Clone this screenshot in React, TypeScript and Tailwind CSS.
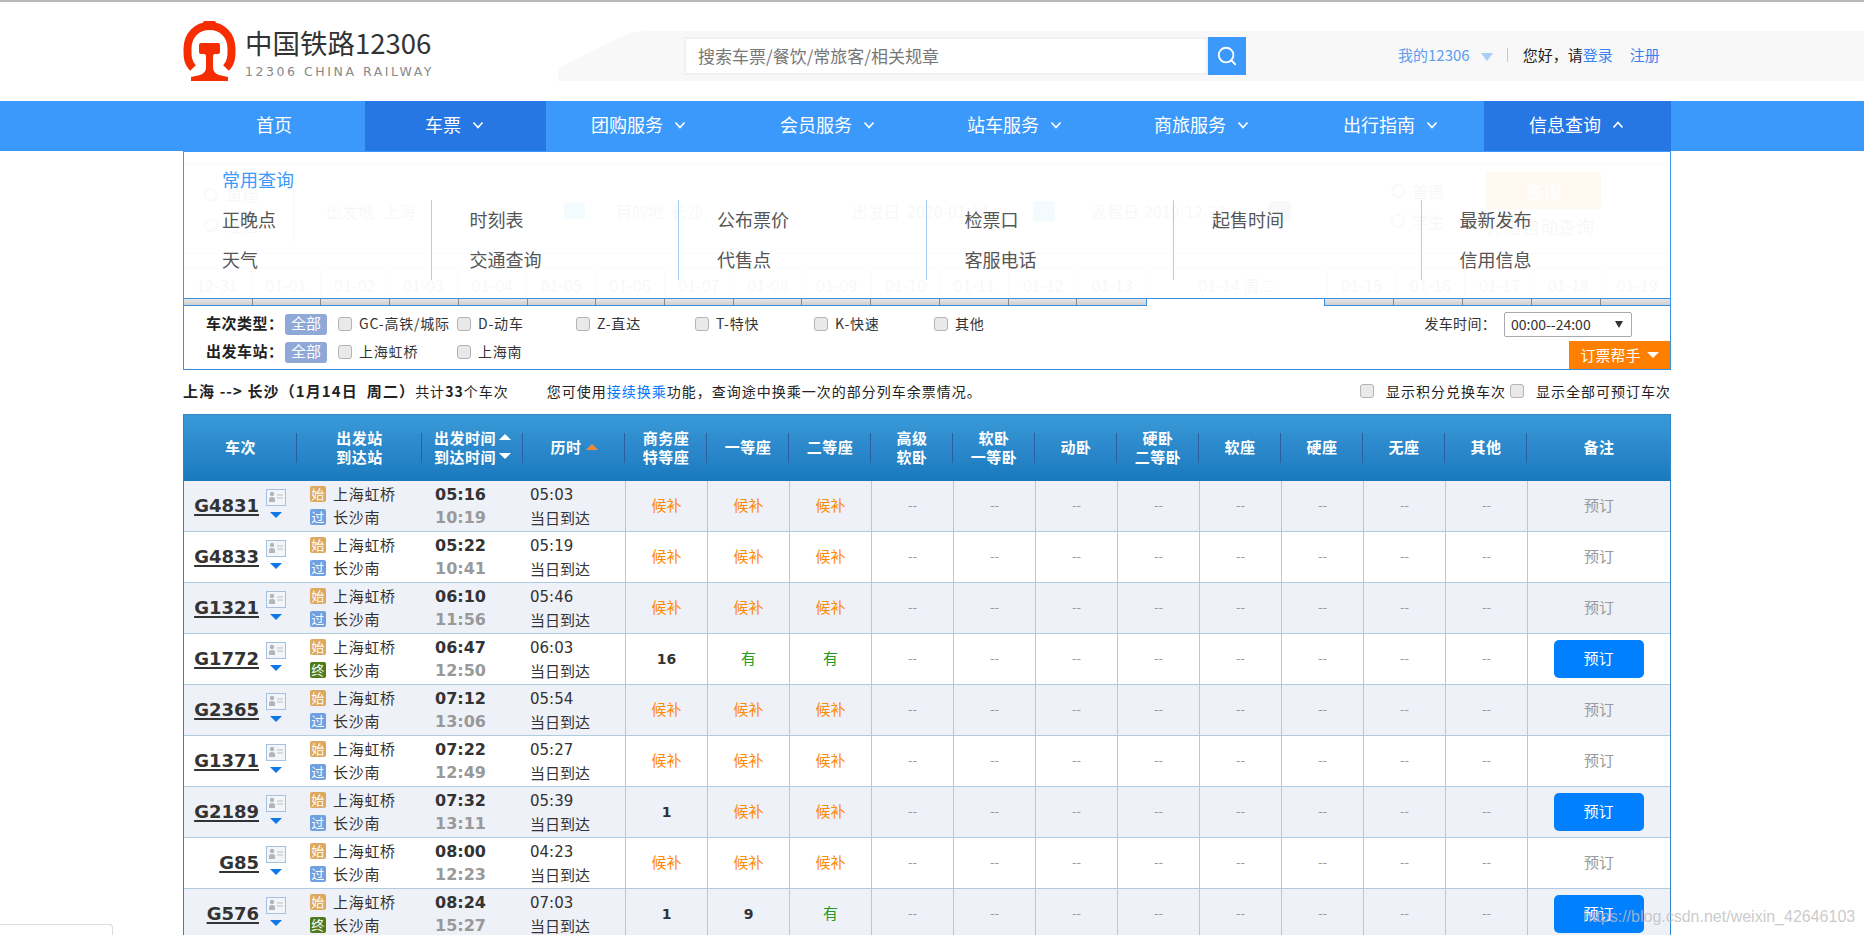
import { Search } from "lucide-react";

const CJK = "font-['Noto_Sans_CJK_SC',sans-serif]";
const PRIMARY = "font-['DejaVu_Sans',sans-serif]";

function Chevron({ up }: { up?: boolean }) {
  return (
    <svg width="12" height="8" viewBox="0 0 12 8" className="ml-[11px] mt-[1px]">
      <polyline points={up ? "1.5,6.5 6,1.5 10.5,6.5" : "1.5,1.5 6,6.5 10.5,1.5"} fill="none" stroke="#fff" strokeWidth="1.7" />
    </svg>
  );
}

function Logo() {
  return (
    <svg width="53" height="60" viewBox="0 0 53 60" className="shrink-0">
      <rect x="20" y="0" width="13" height="7" rx="2" fill="#f62d00" />
      <path d="M10 47 C4 41 4.500 34 4.500 28 C4.500 14 14 5 26.500 5 C39 5 48.500 14 48.500 28 C48.500 34 49 41 43 47" fill="none" stroke="#f62d00" strokeWidth="8" />
      <path d="M18 22 H35 Q37 22 37 24 V31 Q37 33 35 33 H32 Q30 33 30 36 V46 Q30 52 36 54 L45 56 V60 H8 V56 L17 54 Q23 52 23 46 V36 Q23 33 21 33 H18 Q16 33 16 31 V24 Q16 22 18 22 Z" fill="#f62d00" />
    </svg>
  );
}

function Header() {
  return (
    <header className="relative h-[101px] border-t-2 border-[#b8b8b8] bg-white">
      <svg className="absolute left-[558px] top-[29px] h-[50px] w-[1306px]" viewBox="0 0 1306 50" preserveAspectRatio="none">
        <path d="M0 50 V42 Q0 38 6 34 L62 6 Q74 0 92 0 H1306 V50 Z" fill="#f8f8f8" />
      </svg>
      <div className="relative ml-[183px] flex h-full w-[1488px] items-start">
        <div className="mt-[19px] flex">
          <Logo />
          <div className="ml-[9px] flex w-[190px] flex-col">
            <span className={`${CJK} mt-[4px] whitespace-nowrap text-[27.500px] leading-[34px] text-[#333]`}>中国铁路12306</span>
            <span className={`${PRIMARY} mt-[5px] whitespace-nowrap text-[12.500px] leading-[15px] tracking-[2.550px] text-[#888]`}>12306 CHINA RAILWAY</span>
          </div>
        </div>
        <div className="ml-[249px] mt-[35px] flex h-[38px]">
          <div className="flex h-full w-[524px] items-center border-2 border-[#f1f1f1] bg-white pb-[2px] pl-[12px]">
            <span className={`${CJK} text-[17px] leading-none text-[#777]`}>搜索车票/餐饮/常旅客/相关规章</span>
          </div>
          <div className="flex h-full w-[38px] items-center justify-center bg-[#3b99fc]">
            <Search size={22} color="#fff" strokeWidth={2} />
          </div>
        </div>
        <div className={`${CJK} ml-[152px] mt-[43px] flex items-center text-[15px] leading-[20px]`}>
          <span className="text-[#5c9ef0]">我的12306</span>
          <span className="ml-[11px] mt-[3px] h-0 w-0 border-x-[6px] border-t-[8px] border-x-transparent border-t-[#a9cdf5]" />
          <span className="ml-[14px] h-[14px] w-px bg-[#a8cdf5]" />
          <span className="ml-[15px] text-[#222]">您好，请</span>
          <span className="text-[#3b82ef]">登录</span>
          <span className="ml-[17px] text-[#3b82ef]">注册</span>
        </div>
      </div>
    </header>
  );
}

const tabs = [
  { t: "首页", w: "w-[182px] justify-center", plain: true },
  { t: "车票", w: "w-[181px] pl-[60px] bg-[#2676e3]" },
  { t: "团购服务", w: "w-[189px] pl-[45px]" },
  { t: "会员服务", w: "w-[187px] pl-[45px]" },
  { t: "站车服务", w: "w-[187px] pl-[45px]" },
  { t: "商旅服务", w: "w-[189px] pl-[45px]" },
  { t: "出行指南", w: "w-[186px] pl-[45px]" },
  { t: "信息查询", w: "w-[187px] pl-[45px] bg-[#2676e3]", up: true },
];

function Nav() {
  return (
    <nav className="h-[50px] bg-[#3b99fc]">
      <div className={`${CJK} ml-[183px] flex h-full w-[1488px] text-[18px] leading-[24px] text-white`}>
        {tabs.map((x) => (
          <div key={x.t} className={`flex h-full items-center pb-[4px] ${x.w}`}>
            <span>{x.t}</span>
            {!x.plain && <Chevron up={x.up} />}
          </div>
        ))}
      </div>
    </nav>
  );
}

const dateCols = ["12-31", "01-01", "01-02", "01-03", "01-04", "01-05", "01-06", "01-07", "01-08", "01-09", "01-10", "01-11", "01-12", "01-13"];
const dateRight = ["01-15", "01-16", "01-17", "01-18", "01-19"];

function GhostForm() {
  return (
    <div className={`${CJK} h-[146px] text-[16px] leading-[22px] text-[#666]`}>
      <div className="h-[13px] border-b border-[#9ab]" />
      <div className="flex h-[90px] border-b border-[#9ab]">
        <div className="mt-[20px] flex h-[60px] w-[111px] flex-col gap-[8px] border-r border-[#99a] pl-[21px]">
          <div className="flex items-center gap-[8px]">
            <span className="h-[14px] w-[14px] rounded-full border-2 border-[#3b99fc]" />
            单程
          </div>
          <div className="flex items-center gap-[8px]">
            <span className="h-[14px] w-[14px] rounded-full border-2 border-[#888]" />
            往返
          </div>
        </div>
        <div className="mt-[36px] flex h-[22px] items-center whitespace-nowrap">
          <span className="ml-[32px] w-[57px]">出发地</span>
          <span className="w-[181px]">上海</span>
          <span className="h-[16px] w-[21px] rounded-[3px] bg-[#27a9e8]" />
          <span className="ml-[31px] w-[55px]">目的地</span>
          <span className="w-[181px]">长沙</span>
          <span className="w-[55px]">出发日</span>
          <span className="w-[126px]">2020-01-14</span>
          <span className="h-[20px] w-[22px] rounded-[2px] bg-[#27a9e8]" />
          <span className="ml-[36px] w-[53px]">返程日</span>
          <span className="w-[125px]">2019-12-31</span>
          <span className="h-[20px] w-[22px] rounded-[2px] bg-[#777]" />
        </div>
        <div className="ml-[100px] mt-[16px] flex h-[60px] w-[70px] flex-col gap-[8px] whitespace-nowrap">
          <div className="flex items-center gap-[7px]">
            <span className="h-[14px] w-[14px] rounded-full border-2 border-[#888]" />
            普通
          </div>
          <div className="flex items-center gap-[7px]">
            <span className="h-[14px] w-[14px] rounded-full border-2 border-[#888]" />
            学生
          </div>
        </div>
        <div className="ml-[25px] mt-[8px] flex flex-col">
          <div className="flex h-[37px] w-[115px] items-center justify-center rounded-[3px] bg-[#ff8000] text-[18px] text-white">查询</div>
          <span className="mt-[6px] whitespace-nowrap text-[18px]">开启自动查询</span>
        </div>
      </div>
      <div className="mt-[14px] flex h-[28px] border-t border-[#9ab] text-[16px] leading-[32px]">
        {dateCols.map((d) => (
          <div key={d} className="w-[69px] border-r border-[#aab] text-center">
            {d}
          </div>
        ))}
        <div className="w-[180px] text-center">01-14 周二</div>
        {dateRight.map((d) => (
          <div key={d} className="w-[69px] border-l border-[#aab] text-center">
            {d}
          </div>
        ))}
      </div>
    </div>
  );
}

const menu = [
  ["正晚点", "天气"],
  ["时刻表", "交通查询"],
  ["公布票价", "代售点"],
  ["检票口", "客服电话"],
  ["起售时间", ""],
  ["最新发布", "信用信息"],
];

function Dropdown() {
  return (
    <div className={`${CJK} absolute inset-0 border-x border-t border-[#3b99fc] bg-white/[0.95] pt-[13px]`}>
      <div className="h-[30px] pl-[38px] text-[18px] leading-[28px] text-[#3b99fc]">常用查询</div>
      <div className="mt-[5px] flex">
        {menu.map((col, i) => (
          <div key={col[0]} className={`h-[80px] w-[247.500px] pl-[38px] text-[18px] leading-[38px] text-[#555] ${i < 5 ? "border-r border-[#a9cdf5]" : ""}`}>
            <div className="h-[40px]">{col[0]}</div>
            <div className="h-[40px]">{col[1]}</div>
          </div>
        ))}
      </div>
    </div>
  );
}

function Strip() {
  return (
    <div className="flex h-[8px] border-x border-[#3b99fc]">
      <div className="flex w-[962px] border-y border-[#3b8fdc] bg-gradient-to-b from-[#e6e6e6] to-[#cfcfcf]">
        {dateCols.map((d) => (
          <div key={d} className="w-[69px] border-r border-[#888] last:border-r-0" />
        ))}
      </div>
      <div className="w-[181px] border-x border-t border-[#3b8fdc] bg-white" />
      <div className="flex flex-1 border-y border-[#3b8fdc] bg-gradient-to-b from-[#e6e6e6] to-[#cfcfcf]">
        {dateRight.map((d) => (
          <div key={d} className="w-[69px] border-r border-[#888] last:border-r-0" />
        ))}
      </div>
    </div>
  );
}

function Check({ className = "" }: { className?: string }) {
  return <span className={`inline-block h-[14px] w-[14px] shrink-0 rounded-[3px] border border-[#b4b4b4] bg-[#e9e9e9] ${className}`} />;
}

function FilterItem({ label, w }: { label: string; w: string }) {
  return (
    <div className={`flex items-center ${w}`}>
      <Check />
      <span className="ml-[7px] whitespace-nowrap pb-[2px] tracking-[0.800px]">{label}</span>
    </div>
  );
}

function Filters() {
  return (
    <div className={`${CJK} h-[64px] border-x border-b border-[#3b8fdc] pt-[4px] text-[14px] leading-[20px] text-[#333]`}>
      <div className="flex h-[28px] items-center pl-[21px]">
        <span className="w-[80px] whitespace-nowrap pb-[2px] pl-[1px] text-[15px] font-bold tracking-[0.500px] text-[#222]">车次类型：</span>
        <span className="flex h-[21px] w-[42px] items-center justify-center rounded-[3px] bg-[#8fa8d8] pb-[2px] text-[15px] text-white">全部</span>
        <FilterItem label="GC-高铁/城际" w="ml-[11px] w-[119px]" />
        <FilterItem label="D-动车" w="w-[119px]" />
        <FilterItem label="Z-直达" w="w-[119px]" />
        <FilterItem label="T-特快" w="w-[119px]" />
        <FilterItem label="K-快速" w="w-[120px]" />
        <FilterItem label="其他" w="w-[60px]" />
        <div className="ml-auto flex items-center pr-[38px]">
          <span className="mr-[8px] pb-[2px] tracking-[0.300px]">发车时间：</span>
          <div className="flex h-[25px] w-[128px] items-center justify-between rounded-[2px] border border-[#aaa] bg-white pl-[6px] pr-[8px] text-[14px]">
            <span>00:00--24:00</span>
            <span className="h-0 w-0 border-x-[4px] border-t-[7px] border-x-transparent border-t-[#333]" />
          </div>
        </div>
      </div>
      <div className="flex h-[31px] items-start pl-[21px]">
        <div className="flex h-[28px] items-center">
          <span className="w-[80px] whitespace-nowrap pb-[2px] pl-[1px] text-[15px] font-bold tracking-[0.500px] text-[#222]">出发车站：</span>
          <span className="flex h-[21px] w-[42px] items-center justify-center rounded-[3px] bg-[#8fa8d8] pb-[2px] text-[15px] text-white">全部</span>
          <FilterItem label="上海虹桥" w="ml-[11px] w-[119px]" />
          <FilterItem label="上海南" w="w-[119px]" />
        </div>
        <div className="ml-auto mt-[3px] flex h-[28px] w-[101px] items-center justify-center gap-[6px] bg-[#ff8000] text-[15px] text-white">
          订票帮手
          <span className="h-0 w-0 border-x-[6px] border-t-[6px] border-x-transparent border-t-white" />
        </div>
      </div>
    </div>
  );
}

function Summary() {
  return (
    <div className={`${CJK} flex h-[44px] items-center whitespace-nowrap pb-[3px] text-[14px] leading-[20px] tracking-[1px] text-[#222]`}>
      <span className="text-[15px] font-bold tracking-[1.100px]">上海 --&gt; 长沙（1月14日&nbsp; 周二）</span>
      <span>共计<b>33</b>个车次</span>
      <span className="ml-[38px]">您可使用<span className="text-[#0077ff]">接续换乘</span>功能，查询途中换乘一次的部分列车余票情况。</span>
      <div className="ml-auto flex items-center">
        <Check />
        <span className="ml-[12px]">显示积分兑换车次</span>
        <Check className="ml-[4px]" />
        <span className="ml-[12px]">显示全部可预订车次</span>
      </div>
    </div>
  );
}

const GRID = "grid grid-cols-[113px_125px_101px_102px_repeat(11,82px)_143px]";

const heads: { a: string; b?: string; sort?: string }[] = [
  { a: "车次" },
  { a: "出发站", b: "到达站" },
  { a: "出发时间", b: "到达时间", sort: "time" },
  { a: "历时", sort: "dur" },
  { a: "商务座", b: "特等座" },
  { a: "一等座" },
  { a: "二等座" },
  { a: "高级", b: "软卧" },
  { a: "软卧", b: "一等卧" },
  { a: "动卧" },
  { a: "硬卧", b: "二等卧" },
  { a: "软座" },
  { a: "硬座" },
  { a: "无座" },
  { a: "其他" },
  { a: "备注" },
];

function TableHead() {
  return (
    <div className={`${GRID} ${CJK} h-[66px] items-center bg-gradient-to-b from-[#3a9ad9] to-[#1a78bd] text-[15px] font-bold leading-[19px] tracking-[0.500px] text-white`}>
      {heads.map((h, i) => (
        <div key={h.a + i} className={`flex h-[30px] items-center justify-center pb-[3px] pl-[1px] text-center ${i < 15 ? "border-r border-[#2c5f9f]" : ""}`}>
          {h.sort === "time" ? (
            <div className="flex flex-col">
              <div className="flex items-center gap-[3px]">
                {h.a}
                <span className="h-0 w-0 border-x-[6px] border-b-[6px] border-x-transparent border-b-white" />
              </div>
              <div className="flex items-center gap-[3px]">
                {h.b}
                <span className="h-0 w-0 border-x-[6px] border-t-[6px] border-x-transparent border-t-white" />
              </div>
            </div>
          ) : h.sort === "dur" ? (
            <div className="flex items-center gap-[4px]">
              {h.a}
              <span className="h-0 w-0 border-x-[6px] border-b-[6px] border-x-transparent border-b-[#f08a3c]" />
            </div>
          ) : (
            <div>
              {h.a}
              {h.b && <br />}
              {h.b}
            </div>
          )}
        </div>
      ))}
    </div>
  );
}

function CardIcon() {
  return (
    <svg width="20" height="17" viewBox="0 0 20 17">
      <rect x="0.500" y="0.500" width="19" height="16" fill="#f2f5fa" stroke="#a6c1de" />
      <circle cx="6" cy="5" r="2.200" fill="#b5b5b5" />
      <path d="M3 13 V10 Q3 8 6 8 Q9 8 9 10 V13 Z" fill="#b5b5b5" />
      <path d="M11 6 H17 M11 9 H17" stroke="#c0c0c0" strokeWidth="1.200" />
    </svg>
  );
}

function Badge({ t, c }: { t: string; c: string }) {
  return <span className={`flex h-[16px] w-[16px] items-center justify-center rounded-[2px] pb-[1px] text-[13px] leading-none text-white ${c}`}>{t}</span>;
}

type R = { no: string; a: string; b: string; d: string; end: "过" | "终"; seats: string[]; book?: boolean };

const H = "候补";
const rows: R[] = [
  { no: "G4831", a: "05:16", b: "10:19", d: "05:03", end: "过", seats: [H, H, H] },
  { no: "G4833", a: "05:22", b: "10:41", d: "05:19", end: "过", seats: [H, H, H] },
  { no: "G1321", a: "06:10", b: "11:56", d: "05:46", end: "过", seats: [H, H, H] },
  { no: "G1772", a: "06:47", b: "12:50", d: "06:03", end: "终", seats: ["16", "有", "有"], book: true },
  { no: "G2365", a: "07:12", b: "13:06", d: "05:54", end: "过", seats: [H, H, H] },
  { no: "G1371", a: "07:22", b: "12:49", d: "05:27", end: "过", seats: [H, H, H] },
  { no: "G2189", a: "07:32", b: "13:11", d: "05:39", end: "过", seats: ["1", H, H], book: true },
  { no: "G85", a: "08:00", b: "12:23", d: "04:23", end: "过", seats: [H, H, H] },
  { no: "G576", a: "08:24", b: "15:27", d: "07:03", end: "终", seats: ["1", "9", "有"], book: true },
];

function Seat({ v }: { v: string }) {
  if (v === H) return <span className="pb-[2px] text-[15px] text-[#ff8a00]">{v}</span>;
  if (v === "有") return <span className="pb-[2px] text-[15px] text-[#259b24]">{v}</span>;
  return <span className={`${PRIMARY} text-[14px] font-bold text-[#333]`}>{v}</span>;
}

function Row({ r, i }: { r: R; i: number }) {
  const cell = "flex h-full items-center justify-center border-l border-[#aecbdf]";
  return (
    <div className={`${GRID} ${CJK} h-[51px] items-center border-b border-[#aecbdf] ${i % 2 === 0 ? "bg-[#eef1f8]" : "bg-white"}`}>
      <div className="flex h-full items-center justify-end pr-[11px]">
        <span className={`${PRIMARY} -mt-[1px] text-[18px] font-bold leading-[22px] text-[#333] underline decoration-2 underline-offset-2`}>{r.no}</span>
        <div className="-mt-[6px] ml-[7px] flex w-[20px] flex-col items-center gap-[6px]">
          <CardIcon />
          <span className="h-0 w-0 border-x-[6px] border-t-[6px] border-x-transparent border-t-[#0f78e6]" />
        </div>
      </div>
      <div className="flex flex-col gap-[5px] pb-[2px] pl-[13px] text-[15px] leading-[18px] tracking-[0.700px] text-[#333]">
        <div className="flex items-center gap-[7px]">
          <Badge t="始" c="bg-[#dda860]" />
          上海虹桥
        </div>
        <div className="flex items-center gap-[7px]">
          <Badge t={r.end} c={r.end === "过" ? "bg-[#6fa0e0]" : "bg-[#4d7a1b]"} />
          长沙南
        </div>
      </div>
      <div className={`${PRIMARY} flex flex-col gap-[5px] pl-[13px] text-[16px] font-bold leading-[18px]`}>
        <span className="text-[#333]">{r.a}</span>
        <span className="text-[#999]">{r.b}</span>
      </div>
      <div className="flex flex-col gap-[5px] pl-[7px] text-[15px] leading-[18px] text-[#333]">
        <span className={`${PRIMARY} text-[15px]`}>{r.d}</span>
        <span>当日到达</span>
      </div>
      {r.seats.map((s, k) => (
        <div key={k} className={cell}>
          <Seat v={s} />
        </div>
      ))}
      {Array.from({ length: 8 }).map((_, k) => (
        <div key={k} className={`${cell} pb-[2px] text-[13px] text-[#999]`}>
          --
        </div>
      ))}
      <div className={cell}>
        {r.book ? (
          <span className="-ml-[1px] flex h-[38px] w-[90px] items-center justify-center rounded-[5px] bg-[#0080ff] pb-[2px] text-[15px] text-white">预订</span>
        ) : (
          <span className="pb-[2px] text-[15px] text-[#999]">预订</span>
        )}
      </div>
    </div>
  );
}

export default function App() {
  return (
    <div className="relative h-[935px] w-full overflow-hidden bg-white">
      <Header />
      <Nav />
      <main className="ml-[183px] w-[1488px]">
        <div className="relative h-[147px]">
          <GhostForm />
          <Dropdown />
        </div>
        <Strip />
        <Filters />
        <Summary />
        <div className="border-x border-t border-[#3285c8]">
          <TableHead />
          {rows.map((r, i) => (
            <Row key={r.no} r={r} i={i} />
          ))}
        </div>
      </main>
      <div className="absolute left-0 top-[924px] h-[20px] w-[113px] rounded-tr-[4px] border-r border-t border-[#ddd] bg-white" />
      <span className="absolute left-[1583px] top-[906px] whitespace-nowrap font-['Liberation_Sans',sans-serif] text-[16px] leading-[22px] text-[#bdbdbd]/80">
        https://blog.csdn.net/weixin_42646103
      </span>
    </div>
  );
}
